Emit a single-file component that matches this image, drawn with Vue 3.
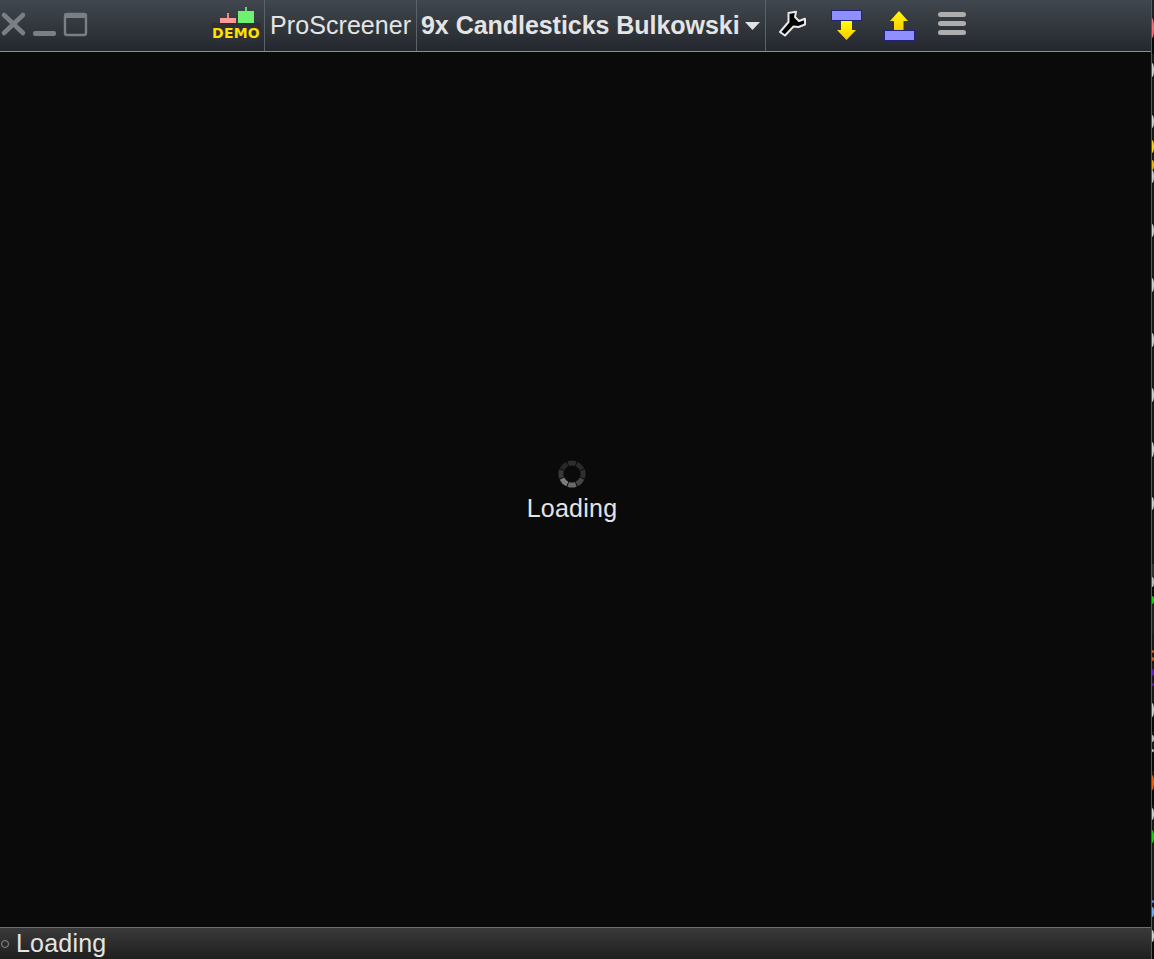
<script setup>
const marks = [
  [18, 20, '#ff6b70'], [63, 14, '#cfcfcf'], [115, 13, '#cfcfcf'], [140, 13, '#ffd800'], [160, 10, '#f0b800'],
  [170, 13, '#cfcfcf'], [224, 13, '#cfcfcf'], [278, 14, '#cfcfcf'], [333, 14, '#cfcfcf'], [388, 14, '#cfcfcf'],
  [442, 15, '#cfcfcf'], [497, 13, '#cfcfcf'], [577, 10, '#bdbdbd'], [596, 8, '#00e000'], [650, 3, '#e06000'],
  [657, 4, '#e06000'], [669, 7, '#6a14e0'], [683, 3, '#6a14e0'], [703, 14, '#cfcfcf'], [735, 7, '#bdbdbd'],
  [749, 3, '#bdbdbd'], [775, 15, '#f06000'], [808, 12, '#cfcfcf'], [830, 13, '#00e000'], [900, 3, '#4a90e0'],
  [907, 10, '#60b0ff'], [930, 12, '#cfcfcf']
]
const bands = [[0, 18, '#222'], [38, 16, '#080808'], [564, 13, '#333'], [587, 9, '#0a0a0a'], [604, 30, '#222'],
  [718, 14, '#0a0a0a'], [753, 18, '#0a0a0a'], [790, 15, '#0a0a0a'], [843, 55, '#1c1c1c'], [942, 17, '#0a0a0a']]
const spinner = [
  [0, '#2e2e2e'], [45, '#2a2a2a'], [90, '#2e2e2e'], [135, '#454545'],
  [180, '#6a6a6a'], [225, '#7c7c7c'], [270, '#383838'], [315, '#282828']
]
</script>

<template>
  <div class="page">
    <div class="window">
      <header class="bar">
        <div class="controls">
          <svg width="90" height="51" viewBox="0 0 90 51">
            <path d="M4 15 L23 33 M23 15 L4 33" stroke="#7a7f86" stroke-width="4.5" stroke-linecap="round" fill="none" />
            <rect x="33" y="31" width="23" height="5" rx="2" fill="#7a7f86" />
            <rect x="65" y="14" width="21" height="21" rx="2" fill="none" stroke="#7a7f86" stroke-width="2.4" />
            <rect x="65" y="14" width="21" height="4" fill="#7a7f86" />
          </svg>
        </div>
        <div class="demo">
          <svg class="candles" width="56" height="24" viewBox="0 0 56 24">
            <rect x="19" y="13" width="2" height="6" fill="#f08a8a" />
            <rect x="12" y="18" width="16" height="5" fill="#ff9a9a" />
            <rect x="37" y="7" width="2" height="5" fill="#5ce05c" />
            <rect x="30" y="11" width="16" height="12" fill="#70f070" />
          </svg>
          <span class="demo-label">DEMO</span>
        </div>
        <div class="cell plain">ProScreener</div>
        <div class="cell title">
          <span class="title-text">9x Candlesticks Bulkowski</span>
          <svg width="15" height="8" viewBox="0 0 15 8"><path d="M0 0 H15 L7.5 8 Z" fill="#e2e2e2" /></svg>
        </div>
        <div class="tools">
          <svg class="wrench" width="30" height="30" viewBox="0 0 30 30">
            <path
              d="M10.5 4 L18 2.8 L17 8 L21 12 L27 9.8 L27 15.5 L20.5 18 L15.5 17.5 L7 26.5 L2 23 L10.5 13 Z"
              fill="#000"
              stroke="#e8e8e8"
              stroke-width="2"
              stroke-linejoin="round"
            />
          </svg>
          <svg class="updown" width="32" height="32" viewBox="0 0 32 32">
            <defs>
              <linearGradient id="gold" x1="0" y1="0" x2="0" y2="1">
                <stop offset="0" stop-color="#ffff00" />
                <stop offset="1" stop-color="#ffc800" />
              </linearGradient>
            </defs>
            <rect x="0.5" y="0.5" width="30" height="10" fill="#8f8fff" stroke="#22227a" />
            <path d="M10 11 H21 V20 H25 L15.5 30 L6 20 H10 Z" fill="url(#gold)" />
          </svg>
          <svg class="updown second" width="32" height="32" viewBox="0 0 32 32">
            <path d="M10 21 H19.5 V11 H24 L15 1 L6 11 H10 Z" fill="url(#gold)" />
            <rect x="0.5" y="20.5" width="30" height="10" fill="#8f8fff" stroke="#22227a" />
          </svg>
          <div class="menu"><i></i><i></i><i></i></div>
        </div>
      </header>

      <main class="content">
        <svg width="28" height="28" viewBox="-14 -14 28 28">
          <path
            v-for="s in spinner"
            :key="s[0]"
            d="M-3.8 -10.4 A 11 11 0 0 1 3.8 -10.4"
            fill="none"
            stroke-width="5"
            :stroke="s[1]"
            :transform="`rotate(${s[0]})`"
          />
        </svg>
        <div class="loading">Loading</div>
      </main>

      <footer class="status">
        <span class="dot"></span>
        <span class="status-text">Loading</span>
      </footer>
    </div>
    <aside class="sliver">
      <span v-for="b in bands" :key="'b' + b[0]" class="band" :style="{ top: b[0] + 'px', height: b[1] + 'px', background: b[2] }"></span>
      <span v-for="m in marks" :key="m[0]" class="mark" :style="{ top: m[0] + 'px', height: m[1] + 'px', background: m[2] }"></span>
    </aside>
  </div>
</template>

<style>
html, body { margin: 0; background: #0a0a0b; }
</style>

<style scoped>
.page {
  display: flex;
  width: 1154px;
  height: 959px;
  overflow: hidden;
  font-family: "Liberation Sans", Arial, sans-serif;
  color: #e4e4e4;
}
.window {
  flex: 0 0 1151px;
  display: flex;
  flex-direction: column;
  border-right: 1px solid #5a5a5a;
  background: #0a0a0b;
}
.bar {
  flex: 0 0 51px;
  display: flex;
  border-bottom: 1px solid #8a8f94;
  background: linear-gradient(#41474e, #24282e);
}
.controls { width: 208px; }
.controls svg { display: block; }
.demo {
  position: relative;
  width: 57px;
  box-sizing: border-box;
  border-right: 1px solid #5c6269;
}
.candles { position: absolute; left: 0; top: 0; }
.demo-label {
  position: absolute;
  left: 3px;
  top: 23px;
  width: 50px;
  height: 18px;
  border-radius: 3px;
  background: #2d3137;
  color: #ffe000;
  font: bold 14px/20px "DejaVu Sans", sans-serif;
  letter-spacing: 0.2px;
  text-align: center;
}
.cell {
  display: flex;
  align-items: center;
  box-sizing: border-box;
  font-size: 25px;
  border-right: 1px solid #5c6269;
}
.plain { width: 152px; padding-left: 5px; letter-spacing: 0.08px; }
.title { width: 349px; padding-left: 4px; gap: 5px; font-weight: bold; }
.title-text { letter-spacing: -0.04px; }
.title svg { flex: none; margin-top: 1px; }
.tools {
  display: flex;
  align-items: flex-start;
  flex: 1;
}
.tools svg { display: block; flex: none; }
.wrench { margin: 9px 0 0 12px; }
.updown { margin: 10px 0 0 23px; }
.second { margin-left: 21px; }
.menu {
  display: flex;
  flex-direction: column;
  gap: 4px;
  width: 28px;
  margin: 12px 0 0 22px;
}
.menu i {
  display: block;
  height: 5px;
  border-radius: 3px;
  background: #adadad;
}
.content {
  flex: 1;
  display: flex;
  flex-direction: column;
  align-items: center;
  justify-content: center;
  gap: 5px;
  padding: 3px 7px 0 0;
}
.content svg { display: block; }
.loading { font-size: 25px; line-height: 30px; letter-spacing: 0.25px; }
.status {
  flex: 0 0 31px;
  display: flex;
  align-items: center;
  gap: 7px;
  padding-left: 1px;
  font-size: 25px;
  border-top: 1px solid #6e6e6e;
  background: linear-gradient(#3a3a3a, #1f1f1f);
}
.status-text { letter-spacing: 0.2px; }
.dot {
  width: 6px;
  height: 6px;
  margin-top: 1px;
  border: 1px solid #8a8a8a;
  border-radius: 50%;
}
.sliver {
  position: relative;
  flex: 0 0 2px;
  background: #1a1a1a;
}
.band, .mark { position: absolute; left: 0; width: 2px; }
.mark { border-radius: 0 100% 100% 0 / 0 50% 50% 0; }
</style>
